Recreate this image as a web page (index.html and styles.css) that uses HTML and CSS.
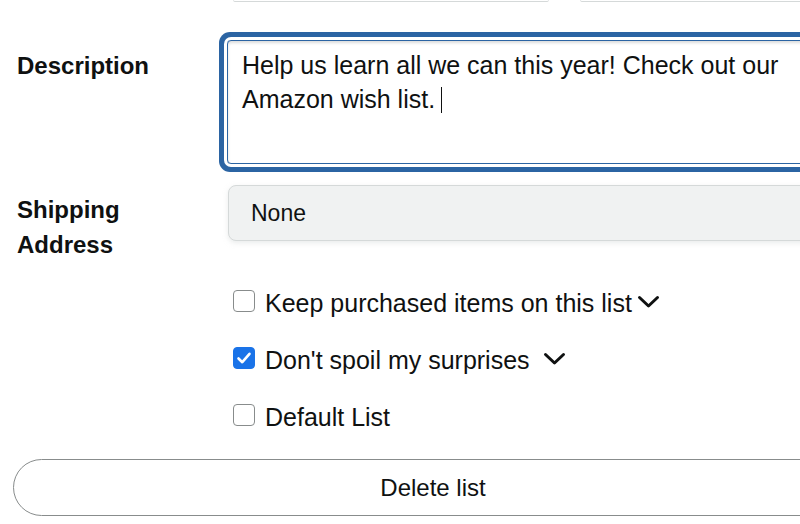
FILE: index.html
```html
<!DOCTYPE html>
<html lang="en">
<head>
<meta charset="utf-8">
<title>Edit list</title>
<link rel="stylesheet" href="styles.css">
</head>
<body>
<div class="page">
  <div class="prev-row">
    <div class="prev-btn prev-btn-a"></div>
    <div class="prev-btn prev-btn-b"></div>
  </div>

  <div class="form">
    <div class="row row-desc">
      <div class="label label-desc">Description</div>
      <div class="textarea">Help us learn all we can this year! Check out our Amazon wish list.<span class="caret"></span></div>
    </div>

    <div class="row row-ship">
      <div class="label label-ship">Shipping<br>Address</div>
      <div class="select">None</div>
    </div>

    <div class="checks">
      <div class="check">
        <span class="box"></span>
        <span class="check-text">Keep purchased items on this list</span>
        <svg class="chev chev-tight" width="23" height="14" viewBox="0 0 23 14"><path d="M2.5 2.5 L11.5 11 L20.5 2.5" fill="none" stroke="#0f1111" stroke-width="3" stroke-linecap="round" stroke-linejoin="round"/></svg>
      </div>
      <div class="check">
        <span class="box box-on">
          <svg width="22" height="22" viewBox="0 0 22 22"><path d="M5.5 11.5 L9.3 15.2 L16.5 6.8" fill="none" stroke="#fff" stroke-width="2.6" stroke-linecap="round" stroke-linejoin="round"/></svg>
        </span>
        <span class="check-text">Don't spoil my surprises</span>
        <svg class="chev chev-spaced" width="23" height="14" viewBox="0 0 23 14"><path d="M2.5 2.5 L11.5 11 L20.5 2.5" fill="none" stroke="#0f1111" stroke-width="3" stroke-linecap="round" stroke-linejoin="round"/></svg>
      </div>
      <div class="check">
        <span class="box"></span>
        <span class="check-text">Default List</span>
      </div>
    </div>

    <div class="delete-btn">Delete list</div>
  </div>
</div>
</body>
</html>
```

FILE: styles.css
```css
html, body {
  margin: 0;
  padding: 0;
  background: #fff;
}

body {
  width: 800px;
  height: 524px;
  overflow: hidden;
  font-family: "Liberation Sans", Arial, sans-serif;
  color: #0f1111;
}

.page {
  width: 860px;
}

.prev-row {
  display: flex;
  height: 2px;
  padding-left: 233px;
  gap: 31px;
}

.prev-btn {
  height: 1px;
  border-bottom: 1px solid #d5d9d9;
  border-left: 1px solid #e3e6e6;
  border-right: 1px solid #e3e6e6;
  border-radius: 0 0 4px 4px;
}

.prev-btn-a { width: 338px; }
.prev-btn-b { width: 300px; }

.form {
  padding-left: 17px;
}

.row {
  display: grid;
  grid-template-columns: 210px 1fr;
  align-items: start;
}

.row-desc { margin-top: 38px; }
.row-ship { margin-top: 21px; }

.label {
  font-weight: bold;
  font-size: 24px;
  line-height: 35px;
}

.label-desc { padding-top: 8px; }
.label-ship { padding-top: 7px; }

.textarea {
  box-sizing: border-box;
  height: 124px;
  border: 1px solid #2b64a3;
  border-radius: 4px;
  box-shadow: 0 0 0 3px #fff, 0 0 0 8px #2b64a3, inset 0 2px 3px rgba(15, 17, 17, 0.15);
  padding: 7px 20px 0 14px;
  font-size: 25px;
  line-height: 34px;
  width: 600px;
}

.caret {
  display: inline-block;
  width: 1px;
  height: 26px;
  background: #0f1111;
  vertical-align: -5px;
  margin-left: 6px;
}

.select {
  box-sizing: border-box;
  height: 56px;
  margin-left: 1px;
  display: flex;
  align-items: center;
  padding-left: 22px;
  background: #f0f2f2;
  border: 1px solid #d5d9d9;
  border-radius: 8px;
  font-size: 23px;
  width: 620px;
  box-shadow: 0 2px 5px rgba(213, 217, 217, 0.5);
}

.checks {
  display: flex;
  flex-direction: column;
  gap: 35px;
  margin-top: 28px;
  padding-left: 216px;
}

.check {
  display: flex;
  align-items: center;
  height: 22px;
  font-size: 25px;
}

.box {
  box-sizing: border-box;
  width: 22px;
  height: 22px;
  border: 1px solid #888c8c;
  border-radius: 4px;
  background: #fff;
  margin-right: 10px;
  flex: none;
  display: flex;
}

.box-on {
  background: #1a73e8;
  border-color: #1a73e8;
}

.box-on svg {
  margin: -1px;
}

.check-text {
  white-space: nowrap;
  line-height: 30px;
  position: relative;
  top: 2px;
}

.chev {
  flex: none;
  margin-top: 2px;
}

.chev-tight { margin-left: 5px; }
.chev-spaced { margin-left: 13px; }

.delete-btn {
  box-sizing: border-box;
  margin-top: 33px;
  margin-left: -4px;
  width: 840px;
  height: 57px;
  border: 1px solid #888c8c;
  border-radius: 29px;
  display: flex;
  align-items: center;
  justify-content: center;
  font-size: 24px;
}
```
